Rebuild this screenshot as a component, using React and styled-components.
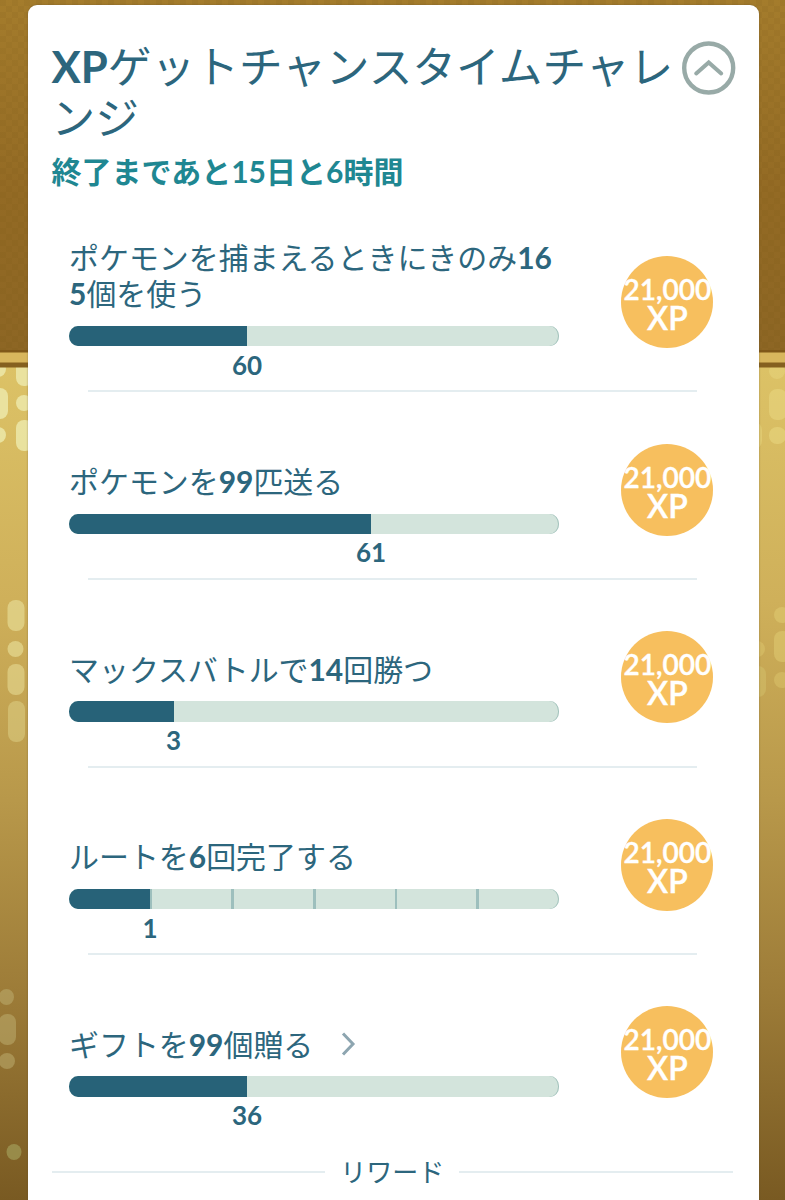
import React from 'react';
import styled, { createGlobalStyle } from 'styled-components';

const Global = createGlobalStyle`
  * { box-sizing: border-box; }
  body { margin: 0; background: #8f6823; }
`;

const Page = styled.main`
  position: relative;
  width: 785px;
  height: 1200px;
  overflow: hidden;
  padding: 5px 26.5px 0 27.5px;
  font-family: Lato, 'Noto Sans CJK JP', sans-serif;
  color: #2c667d;
`;

const Backdrop = styled.svg`
  position: absolute;
  inset: 0;
`;

const Card = styled.section`
  position: relative;
  height: 1215px;
  background: #fff;
  border-radius: 9px;
  box-shadow: 0 0 2px rgba(90, 75, 50, 0.55);
`;

const Header = styled.header`
  height: 199.4px;
  padding: 36px 23px 0 24px;
`;

const TitleRow = styled.div`
  display: flex;
  justify-content: space-between;
  align-items: flex-start;
`;

const Title = styled.h1`
  margin: 0;
  width: 628px;
  font-size: 43.7px;
  font-weight: 400;
  line-height: 51px;
  white-space: nowrap;
`;

const Strong = styled.b`
  font-weight: 700;
`;

const Collapse = styled.button`
  flex: none;
  width: 54px;
  height: 54px;
  padding: 0;
  border: 0;
  background: none;
  svg { display: block; }
`;

const Remaining = styled.p`
  margin: 5px 0 0;
  font-size: 30px;
  font-weight: 700;
  line-height: 46px;
  color: #1f8792;
`;

const Task = styled.article`
  display: flex;
  position: relative;
  height: 187.6px;
  padding-left: 41.5px;
`;

const TaskBody = styled.div`
  width: 490px;
`;

const Label = styled.div`
  display: flex;
  align-items: flex-end;
  height: 107px;
  font-size: 29.95px;
  line-height: 36px;
  white-space: nowrap;
`;

const Arrow = styled.svg`
  margin: 0 0 6px 28px;
`;

const Track = styled.div`
  position: relative;
  display: flex;
  height: 20.5px;
  margin-top: 14.6px;
  border-radius: 9px / 10.2px;
  overflow: hidden;
  background: #d3e4dc;
  box-shadow: inset -1px 0 0 #a3c3bd;
`;

const Fill = styled.div`
  width: ${(p) => p.$width}px;
  background: #276278;
`;

const Tick = styled.i`
  position: absolute;
  top: 0;
  left: ${(p) => p.$at}px;
  width: 2.5px;
  height: 100%;
  background: #9dbfbd;
`;

const Count = styled.div`
  width: 60px;
  margin: 2.4px 0 0 ${(p) => p.$at - 30}px;
  text-align: center;
  font-size: 26px;
  font-weight: 700;
  line-height: 32px;
`;

const Badge = styled.div`
  width: 92px;
  height: 92px;
  margin: 51.6px 0 0 62.4px;
  padding-top: 19px;
  border-radius: 50%;
  background: #f7bf5e;
  color: #fff;
  display: flex;
  flex-direction: column;
  align-items: center;
  font-weight: 600;
  -webkit-text-stroke: 0.4px #fff;
  white-space: nowrap;
`;

const Amount = styled.span`
  font-size: 28px;
  line-height: 28px;
`;

const Unit = styled.span`
  font-size: 32px;
  line-height: 30px;
`;

const Divider = styled.hr`
  position: absolute;
  left: 60.5px;
  bottom: -0.4px;
  width: 609px;
  height: 2px;
  margin: 0;
  border: 0;
  background: #e4edf0;
`;

const RewardHeading = styled.div`
  display: flex;
  align-items: center;
  gap: 15px;
  height: 40px;
  margin: 10px 25.5px 0 24px;
  font-size: 26px;
  line-height: 40px;
  &::before, &::after {
    content: '';
    flex: 1;
    height: 2px;
    background: #e4edf0;
  }
`;

const tasks = [
  { label: <>ポケモンを捕まえるときにきのみ<Strong>16<br />5</Strong>個を使う</>, fill: 178, count: 60 },
  { label: <>ポケモンを<Strong>99</Strong>匹送る</>, fill: 302, count: 61 },
  { label: <>マックスバトルで<Strong>14</Strong>回勝つ</>, fill: 104.5, count: 3 },
  { label: <>ルートを<Strong>6</Strong>回完了する</>, fill: 81, count: 1, steps: 6 },
  { label: <>ギフトを<Strong>99</Strong>個贈る</>, fill: 178, count: 36, link: true },
];

const pills = [
  [-10, 361, 16, 16, '#ebe5a5', 0.9], [16, 355, 17, 31, '#ebe5a5', 0.9],
  [-9, 388, 17, 31, '#ebe5a5', 0.9], [16, 395, 16, 16, '#ebe5a5', 0.9],
  [-10, 427, 16, 16, '#ebe5a5', 0.9], [16, 420, 17, 31, '#ebe5a5', 0.9],
  [7.5, 600, 17, 31, '#e6da93', 0.7], [7.5, 641, 16, 16, '#e6da93', 0.7],
  [7.5, 664, 17, 31, '#e6da93', 0.6], [8, 701, 17, 41, '#dfd389', 0.5],
  [-1, 989, 15, 16, '#bfb274', 0.5], [-1, 1014, 17, 31, '#bfb274', 0.5],
  [-1, 1053, 16, 16, '#bfb274', 0.5], [6.5, 1144, 15, 16, '#a5a15c', 0.65],
  [769, 364, 16, 15, '#e8d57e', 0.5], [769, 389, 18, 31, '#e8d57e', 0.6],
  [769, 427, 17, 17, '#e8d57e', 0.6], [746, 422, 16, 27, '#e8d57e', 0.5],
  [774, 607, 16, 16, '#e1cd74', 0.5], [774, 631, 17, 31, '#e1cd74', 0.5],
  [749, 641, 16, 16, '#e1cd74', 0.4], [749, 666, 17, 31, '#d8c774', 0.4],
  [774, 672, 16, 16, '#e1cd74', 0.4],
];

function Scenery() {
  return (
    <Backdrop width="785" height="1200" aria-hidden="true">
      <defs>
        <linearGradient id="wall" x1="0" y1="0" x2="0" y2="1">
          <stop offset="0" stopColor="#a47c2c" />
          <stop offset="0.55" stopColor="#936a24" />
          <stop offset="1" stopColor="#8d6624" />
        </linearGradient>
        <linearGradient id="gold" x1="0" y1="0" x2="0" y2="1">
          <stop offset="0" stopColor="#dcc266" />
          <stop offset="0.28" stopColor="#cfb05a" />
          <stop offset="0.52" stopColor="#b8984a" />
          <stop offset="0.75" stopColor="#9d7c38" />
          <stop offset="1" stopColor="#795a22" />
        </linearGradient>
        <pattern id="weave" width="12" height="12" patternUnits="userSpaceOnUse">
          <path d="M0 0h6v6H0zM6 6h6v6H6z" fill="#6b4812" opacity="0.07" />
        </pattern>
      </defs>
      <rect width="785" height="352" fill="url(#wall)" />
      <rect width="785" height="352" fill="url(#weave)" />
      <rect y="367" width="785" height="833" fill="url(#gold)" />
      {pills.map(([x, y, w, h, c, o]) => (
        <rect key={`${x}-${y}`} x={x} y={y} width={w} height={h} rx="8" fill={c} opacity={o} />
      ))}
      <rect y="350" width="785" height="3" fill="#805819" />
      <rect y="352.5" width="785" height="10.5" fill="#d8b65d" />
      <rect y="362.5" width="785" height="5" fill="#85601f" />
    </Backdrop>
  );
}

export default function App() {
  return (
    <>
      <Global />
      <Page lang="ja">
        <Scenery />
        <Card>
          <Header>
            <TitleRow>
              <Title><Strong>XP</Strong>ゲットチャンスタイムチャレ<br />ンジ</Title>
              <Collapse aria-label="閉じる">
                <svg width="54" height="54" viewBox="0 0 54 54" fill="none" stroke="#98aaa7">
                  <circle cx="26.7" cy="27" r="24.5" strokeWidth="4.4" />
                  <path d="M14.2 32.5 L26.7 21.5 L39.2 32.5" strokeWidth="4" strokeLinecap="round" />
                </svg>
              </Collapse>
            </TitleRow>
            <Remaining>終了まであと15日と6時間</Remaining>
          </Header>
          {tasks.map((task, i) => (
            <Task key={i}>
              <TaskBody>
                <Label>
                  <span>{task.label}</span>
                  {task.link && (
                    <Arrow width="15" height="24" viewBox="0 0 15 24" fill="none" stroke="#8da5b0" strokeWidth="3">
                      <path d="M2 1.5 L12 12 L2 22.5" />
                    </Arrow>
                  )}
                </Label>
                <Track>
                  <Fill $width={task.fill} />
                  {task.steps && Array.from({ length: task.steps - 1 }, (_, n) => (
                    <Tick key={n} $at={((n + 1) * 490) / task.steps - 1} />
                  ))}
                </Track>
                <Count $at={task.fill}>{task.count}</Count>
              </TaskBody>
              <Badge><Amount>21,000</Amount><Unit>XP</Unit></Badge>
              {i < tasks.length - 1 && <Divider />}
            </Task>
          ))}
          <RewardHeading>リワード</RewardHeading>
        </Card>
      </Page>
    </>
  );
}
